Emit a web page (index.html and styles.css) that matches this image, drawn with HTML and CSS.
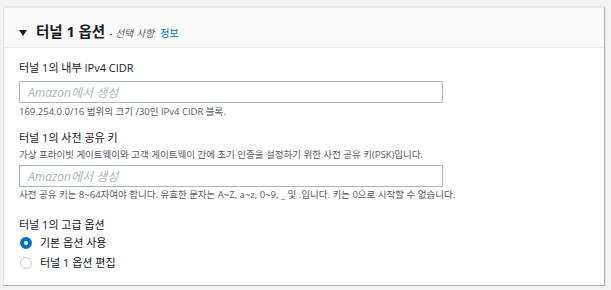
FILE: index.html
```html
<!DOCTYPE html>
<html lang="ko">
<head>
  <meta charset="UTF-8">
  <title>터널 1 옵션</title>
  <link rel="stylesheet" href="styles.css">
</head>
<body>
  <div class="panel">
    <div class="panel-header">
      <span class="caret"></span>
      <h2>터널 1 옵션</h2>
      <span class="optional">- 선택 사항</span>
      <a class="info" href="#">정보</a>
    </div>

    <div class="panel-body">
      <div class="field field-cidr">
        <label for="cidr">터널 1의 내부 IPv4 CIDR</label>
        <input type="text" id="cidr" placeholder="Amazon에서 생성">
        <p class="hint">169.254.0.0/16 범위의 크기 /30인 IPv4 CIDR 블록.</p>
      </div>

      <div class="field field-psk">
        <label for="psk">터널 1의 사전 공유 키</label>
        <p class="desc">가상 프라이빗 게이트웨이와 고객 게이트웨이 간에 초기 인증을 설정하기 위한 사전 공유 키(PSK)입니다.</p>
        <input type="text" id="psk" placeholder="Amazon에서 생성">
        <p class="hint">사전 공유 키는 8~64자여야 합니다. 유효한 문자는 A~Z, a~z, 0~9, _ 및 .입니다. 키는 0으로 시작할 수 없습니다.</p>
      </div>

      <div class="field">
        <span class="label">터널 1의 고급 옵션</span>
        <label class="radio"><input type="radio" name="adv" checked><span class="dot"></span>기본 옵션 사용</label>
        <label class="radio"><input type="radio" name="adv"><span class="dot"></span>터널 1 옵션 편집</label>
      </div>
    </div>
  </div>
</body>
</html>
```

FILE: styles.css
```css
body {
  margin: 0;
  padding: 7px 0 0 3px;
  background-color: #f2f3f3;
  font-family: "Open Sans", "Noto Sans CJK KR", sans-serif;
  color: #16191f;
}
.panel {
  width: 601px;
  height: 279px;
  background-color: #fff;
  border-left: 1px solid #e4e7e7;
  border-bottom: 1px solid #aab1b1;
  box-shadow: 1px 0 1px 0 #aab1b1;
  box-sizing: border-box;
}
.panel-header {
  display: flex;
  align-items: baseline;
  height: 41px;
  box-sizing: border-box;
  padding: 12px 0 0 15px;
  background-color: #fafafa;
  border-bottom: 1px solid #eaeded;
  border-top: 1px solid #eaeded;
}
.caret {
  width: 0;
  height: 0;
  border-left: 4px solid transparent;
  border-right: 4px solid transparent;
  border-top: 6px solid #16191f;
  margin-right: 9px;
  position: relative;
  top: -1px;
}
.panel-header h2 {
  margin: 0;
  font-size: 14.5px;
  font-weight: 700;
}
.optional {
  font-size: 10px;
  font-style: italic;
  color: #545b64;
  margin-left: 4px;
}
.info {
  font-size: 10px;
  color: #0073bb;
  text-decoration: none;
  margin-left: 6px;
}
.panel-body {
  padding: 12px 15px 0 15px;
}
.field-cidr {
  margin-bottom: 11px;
}
.field-psk {
  margin-bottom: 15px;
}
.field label,
.field .label {
  display: block;
  font-size: 11px;
  line-height: 16px;
}
input[type="text"] {
  display: block;
  width: 424px;
  height: 22px;
  box-sizing: border-box;
  margin: 5px 0 2px;
  padding: 0 8px;
  border: 1px solid #aab7b8;
  font-family: inherit;
  font-size: 12px;
}
.field-psk input[type="text"] {
  margin: 3px 0 1px;
}
input[type="text"]::placeholder {
  color: #aab7b8;
  font-style: italic;
}
.hint,
.desc {
  margin: 0;
  font-size: 9.5px;
  line-height: 14px;
  color: #545b64;
}
.desc {
  margin-top: 2px;
}
.radio {
  display: flex !important;
  align-items: center;
  height: 20px;
}
.radio input {
  display: none;
}
.dot {
  width: 12px;
  height: 12px;
  box-sizing: border-box;
  border-radius: 50%;
  border: 1px solid #c2cacb;
  margin: 0 8px 0 1px;
}
.radio input:checked + .dot {
  border: 4px solid #0073bb;
}
```
